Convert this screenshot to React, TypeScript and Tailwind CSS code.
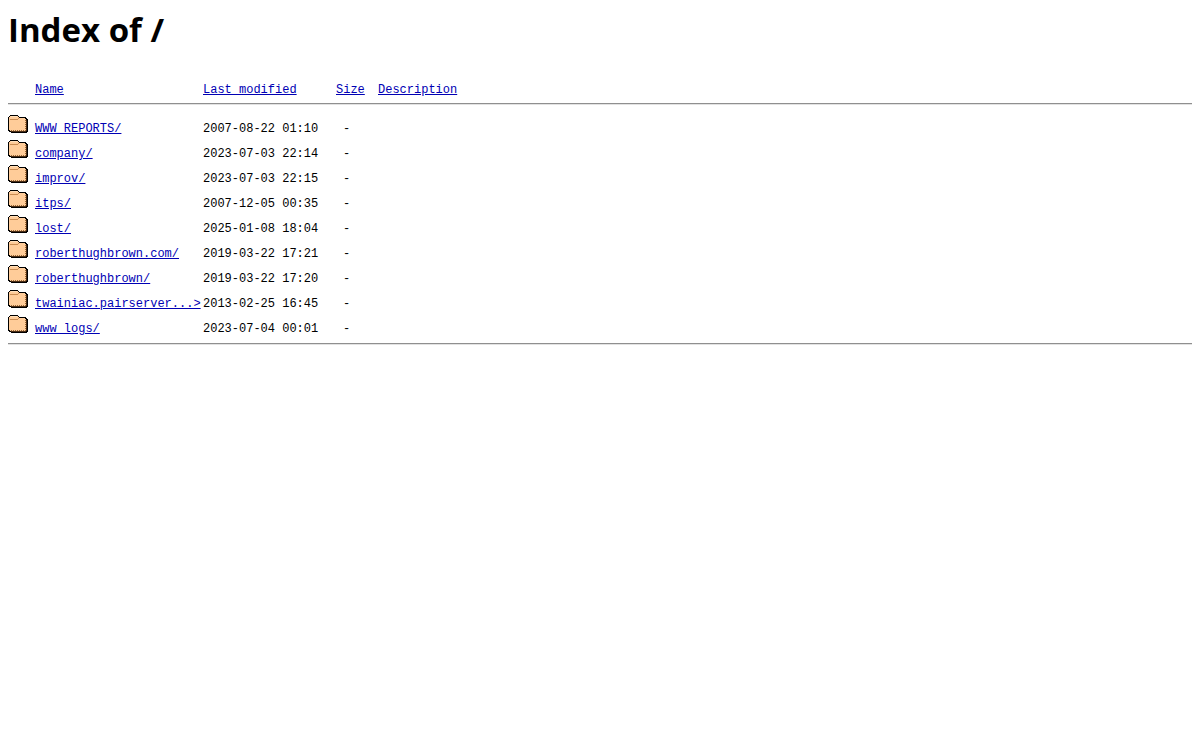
type Entry = {
  name: string
  modified: string
}

const ENTRIES: Entry[] = [
  { name: 'WWW_REPORTS/', modified: '2007-08-22 01:10' },
  { name: 'company/', modified: '2023-07-03 22:14' },
  { name: 'improv/', modified: '2023-07-03 22:15' },
  { name: 'itps/', modified: '2007-12-05 00:35' },
  { name: 'lost/', modified: '2025-01-08 18:04' },
  { name: 'roberthughbrown.com/', modified: '2019-03-22 17:21' },
  { name: 'roberthughbrown/', modified: '2019-03-22 17:20' },
  { name: 'twainiac.pairserver...>', modified: '2013-02-25 16:45' },
  { name: 'www_logs/', modified: '2023-07-04 00:01' },
]

const COLUMNS = ['Name', 'Last modified', 'Size', 'Description']

function FolderIcon() {
  return (
    <svg width="20" height="18" viewBox="0 0 20 18" shapeRendering="crispEdges" role="img" aria-label="[DIR]">
      {/* outline and thick shadow edge */}
      <path
        fill="#000"
        d="M2 0h8v1h1v1h7v1h1v1h1v13h-1v1H3v-1H1v-1H0V2h1V1h1z"
      />
      <path fill="#4a2c14" d="M18 5h1v11h-1zM3 16h15v1H3z" />
      <path fill="#ffcc99" d="M2 1h8v1h1v1h6v1h1v12H2v-1H1V2h1z" />
      {/* tab crease */}
      <path fill="#c88a50" d="M2 4h8v1H2zM10 3h1v1h-1z" />
      <path fill="#ffe0bb" d="M3 1h6v1H3z" />
      {/* stitching */}
      <path
        fill="#996633"
        d="M17 5h1v1h-1zM17 7h1v1h-1zM17 9h1v1h-1zM17 11h1v1h-1zM17 13h1v1h-1zM17 15h1v1h-1zM15 15h1v1h-1zM13 15h1v1h-1zM11 15h1v1h-1zM9 15h1v1H9zM7 15h1v1H7zM5 15h1v1H5zM3 15h1v1H3z"
      />
    </svg>
  )
}

function Rule() {
  return <hr className="border-t border-b border-t-[#8f8f8f] border-b-[#e2e2e2]" />
}

export default function App() {
  return (
    <main className="min-h-screen bg-white px-2 pt-2 text-black">
      <h1 className="font-['Open_Sans','Noto_Sans',sans-serif] text-[33px] leading-[44px] font-bold">
        Index of /
      </h1>
      <table className="mt-6 w-full table-fixed border-collapse text-left font-['Liberation_Mono',monospace] text-xs">
        <colgroup>
          <col className="w-[27px]" />
          <col className="w-[168px]" />
          <col className="w-[133px]" />
          <col className="w-[42px]" />
          <col />
        </colgroup>
        <thead>
          <tr className="h-[27px]">
            <td />
            {COLUMNS.map((label) => (
              <th key={label} scope="col" className="p-0 align-middle font-normal whitespace-nowrap">
                <a href="#" className="text-[#0000b4] underline">
                  {label}
                </a>
              </th>
            ))}
          </tr>
          <tr>
            <td colSpan={5} className="p-0 pb-2">
              <Rule />
            </td>
          </tr>
        </thead>
        <tbody>
          {ENTRIES.map((entry) => (
            <tr key={entry.name} className="h-[25px]">
              <td className="p-0 align-top">
                <div className="pt-0.5">
                  <FolderIcon />
                </div>
              </td>
              <td className="p-0 pb-px align-bottom whitespace-nowrap">
                <a href="#" className="text-[#0000b4] underline">
                  {entry.name}
                </a>
              </td>
              <td className="p-0 pb-px align-bottom whitespace-nowrap">{entry.modified}</td>
              <td className="p-0 pb-px pl-[7px] align-bottom">-</td>
              <td />
            </tr>
          ))}
        </tbody>
      </table>
      <div className="pt-[5px]">
        <Rule />
      </div>
    </main>
  )
}
